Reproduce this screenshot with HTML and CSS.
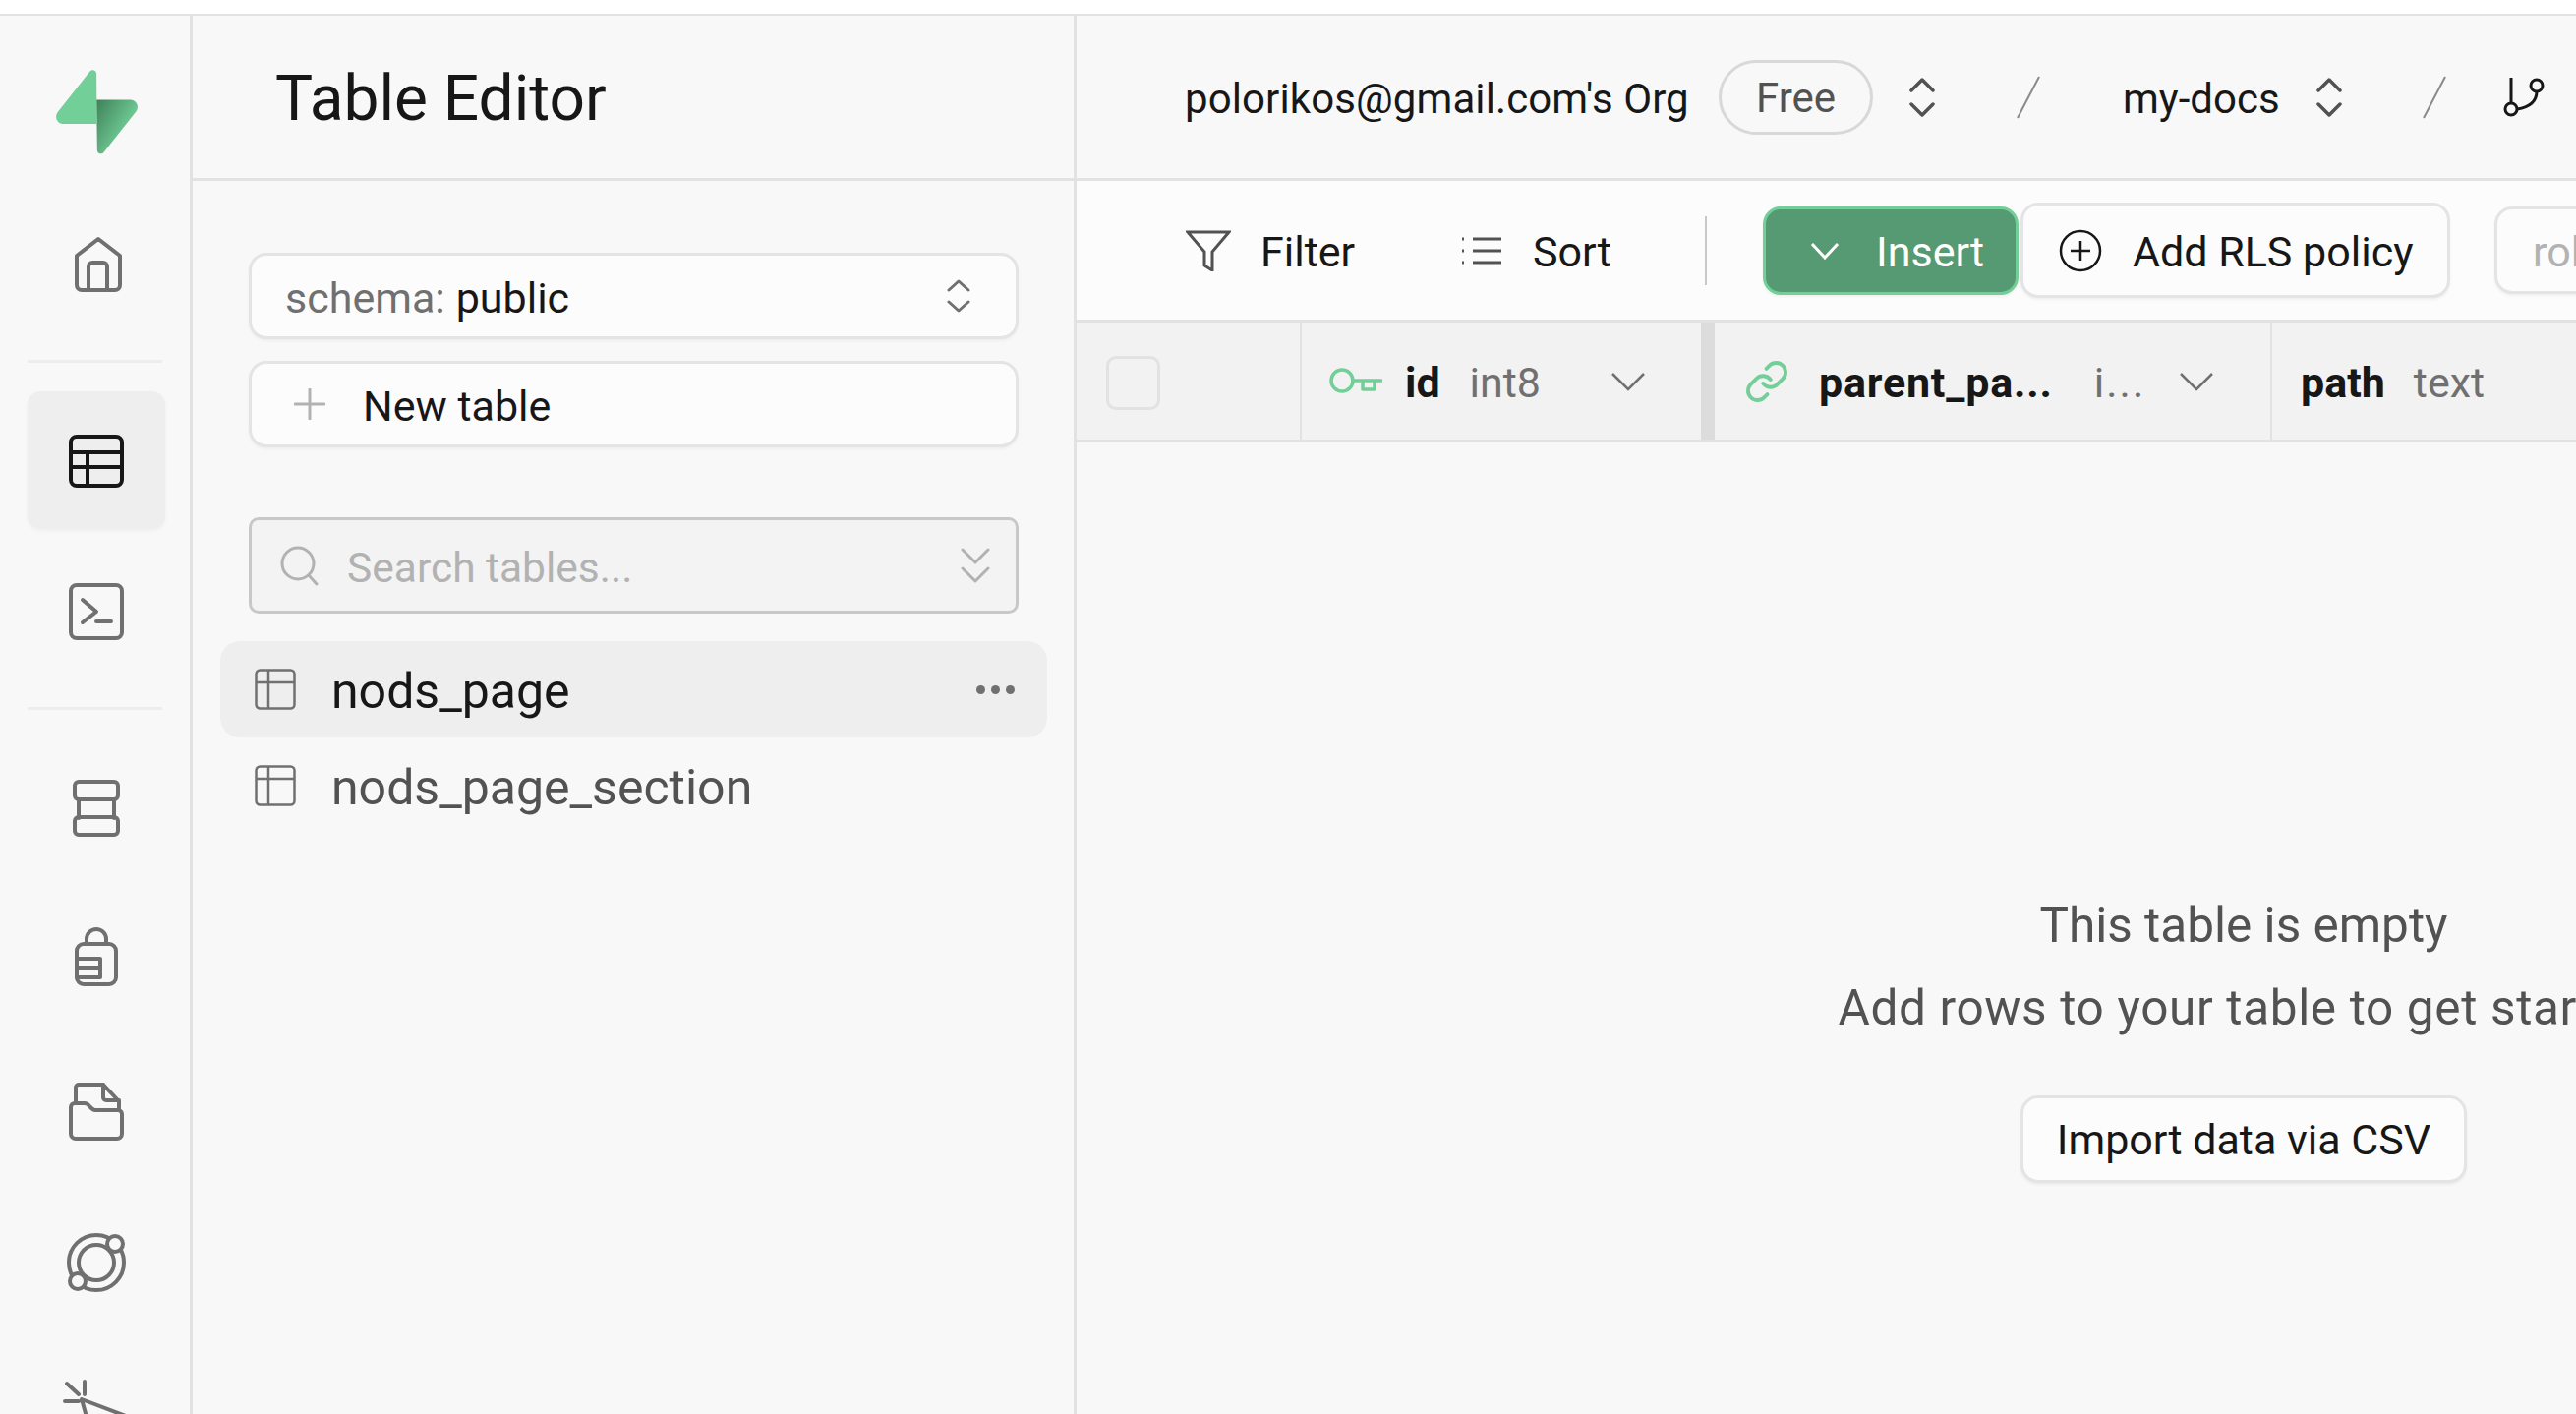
FILE: index.html
```html
<!DOCTYPE html>
<html>
<head>
  <link rel="stylesheet" href="styles.css">
</head>
<body>
  <div class="app">
    <!-- Icon rail -->
    <nav class="rail">
      <div class="rail-logo">
        <svg width="85" height="86" viewBox="0 0 109 113">
          <defs>
            <linearGradient id="boltShade" x1="54" y1="40" x2="104" y2="70" gradientUnits="userSpaceOnUse">
              <stop offset="0" stop-color="#3f8059"/>
              <stop offset="1" stop-color="#72cf97"/>
            </linearGradient>
          </defs>
          <path d="M63.7 110.3C60.8 113.9 55 111.9 55 107.3L54 40.1H99.2C107.4 40.1 112 49.5 106.9 55.9L63.7 110.3Z" fill="url(#boltShade)"/>
          <path d="M45.3 2.1C48.2-1.5 54 .4 54 5L54.5 72.3H9.8C1.6 72.3-2.9 62.8 2.2 56.4L45.3 2.1Z" fill="#72cf97"/>
        </svg>
      </div>
      <a class="rail-item">
        <svg width="60" height="60" viewBox="0 0 60 60"><path d="M10 22 32 5l22 17v30a5 5 0 0 1-5 5H15a5 5 0 0 1-5-5Z"/><path d="M22 57V33a4 4 0 0 1 4-4h11a4 4 0 0 1 4 4v24"/></svg>
      </a>
      <div class="rail-divider"></div>
      <a class="rail-item active">
        <svg width="60" height="60" viewBox="0 0 60 60"><rect x="4" y="6" width="52" height="50" rx="6"/><path d="M4 22h52M4 37h52M21 22v34"/></svg>
      </a>
      <a class="rail-item">
        <svg width="60" height="60" viewBox="0 0 60 60"><rect x="4" y="3" width="52" height="54" rx="6"/><path d="m16 18 14 12-14 11M30 40h15"/></svg>
      </a>
      <div class="rail-divider second"></div>
      <a class="rail-item">
        <svg width="60" height="60" viewBox="0 0 60 60"><rect x="8" y="3" width="44" height="18" rx="4"/><path d="M12 21v19M48 21v19"/><rect x="8" y="39" width="44" height="18" rx="4"/></svg>
      </a>
      <a class="rail-item">
        <svg width="60" height="60" viewBox="0 0 60 60"><path d="M20 14V9a10 10 0 0 1 20 0v5"/><rect x="10" y="14" width="40" height="41" rx="7"/><path d="M10 29h24v19H10M10 38h24"/></svg>
      </a>
      <a class="rail-item">
        <svg width="60" height="60" viewBox="0 0 60 60"><path d="M9 22V6a3 3 0 0 1 3-3h25l16 17v7"/><path d="M37 3v13a3 3 0 0 0 3 3h13"/><path d="M4 26a4 4 0 0 1 4-4h10q3 0 5 3l2 2q2 2 4 2h23a4 4 0 0 1 4 4v20a5 5 0 0 1-5 5H9a5 5 0 0 1-5-5Z"/></svg>
      </a>
      <a class="rail-item">
        <svg width="60" height="60" viewBox="0 0 60 60"><circle cx="30" cy="30" r="28"/><circle cx="30" cy="30" r="18"/><circle class="knock" cx="49" cy="11" r="8"/><circle class="knock" cx="11" cy="49" r="8"/></svg>
      </a>
      <a class="rail-item">
        <svg width="60" height="60" viewBox="0 0 60 60"><path d="m0-1 12 11M18-3v13M-2 17h14M15 15l45 17M15 15l10 36"/></svg>
      </a>
    </nav>

    <!-- Table list -->
    <aside class="panel">
      <div class="panel-head">
        <h1>Table Editor</h1>
      </div>
      <div class="panel-body">
        <div class="field">
          <span class="muted">schema:</span>
          <span class="schema-name">public</span>
          <svg class="thin field-end" width="26" height="34" viewBox="0 0 26 34"><path d="m3 11 10-9 10 9M3 23l10 9 10-9"/></svg>
        </div>
        <div class="field new-table">
          <svg class="thin plus" width="32" height="32" viewBox="0 0 32 32"><path d="M16 1v30M1 16h30"/></svg>
          <span>New table</span>
        </div>
        <div class="search">
          <svg class="thin" width="42" height="42" viewBox="0 0 42 42"><circle cx="18" cy="19" r="16"/><path d="m29 31 8 9"/></svg>
          <span>Search tables...</span>
          <svg class="thin search-end" width="30" height="36" viewBox="0 0 30 36"><path d="m2 2 13 13L28 2M2 21l13 13 13-13"/></svg>
        </div>
        <ul class="table-list">
          <li class="selected">
            <svg class="tbl" width="42" height="42" viewBox="0 0 42 42"><rect x="1.5" y="1.5" width="39" height="39" rx="4"/><path d="M1.5 14h39M14 1.5v39"/></svg>
            <span>nods_page</span>
            <span class="dots"><i></i><i></i><i></i></span>
          </li>
          <li>
            <svg class="tbl" width="42" height="42" viewBox="0 0 42 42"><rect x="1.5" y="1.5" width="39" height="39" rx="4"/><path d="M1.5 14h39M14 1.5v39"/></svg>
            <span>nods_page_section</span>
          </li>
        </ul>
      </div>
    </aside>

    <!-- Main table area -->
    <main class="main">
      <header class="topbar">
        <span class="org">polorikos@gmail.com's Org</span>
        <span class="plan">Free</span>
        <svg class="updown" width="28" height="40" viewBox="0 0 28 40"><path d="m3 13 11-11 11 11M3 27l11 11 11-11"/></svg>
        <svg class="slash" width="24" height="44" viewBox="0 0 24 44"><path d="M23 1 1 43"/></svg>
        <span class="project">my-docs</span>
        <svg class="updown" width="28" height="40" viewBox="0 0 28 40"><path d="m3 13 11-11 11 11M3 27l11 11 11-11"/></svg>
        <svg class="slash second" width="24" height="44" viewBox="0 0 24 44"><path d="M23 1 1 43"/></svg>
        <svg class="branch" width="42" height="42" viewBox="0 0 42 42"><circle cx="8" cy="33" r="6"/><circle cx="34" cy="9" r="6"/><path d="M8 1v26M34 15c0 10-7 16-20 18"/></svg>
      </header>

      <div class="toolbar">
        <div class="tool tool-filter">
          <svg width="46" height="42" viewBox="0 0 46 42"><path d="M2 2h42L27 22v19l-8-5V22Z"/></svg>
          <span>Filter</span>
        </div>
        <div class="tool tool-sort">
          <svg width="42" height="30" viewBox="0 0 42 30"><path d="M12 3h29M12 15h29M12 27h29"/><path class="dash" d="M1 3h2M1 15h2M1 27h2"/></svg>
          <span>Sort</span>
        </div>
        <div class="tool-divider"></div>
        <button class="btn-insert">
          <svg width="30" height="18" viewBox="0 0 30 18"><path d="m2 2 13 14L28 2"/></svg>
          <span>Insert</span>
        </button>
        <button class="btn-rls">
          <svg width="44" height="44" viewBox="0 0 44 44"><circle cx="22" cy="22" r="20"/><path d="M22 12v20M12 22h20"/></svg>
          <span>Add RLS policy</span>
        </button>
        <button class="btn-role"><span>role</span></button>
      </div>

      <div class="grid-head">
        <div class="col col-check"><span class="checkbox"></span></div>
        <div class="col col-id">
          <svg class="col-icon" width="54" height="28" viewBox="0 0 54 28"><circle cx="13" cy="14" r="11"/><path d="M24 14h29M34 14v9h12v-9"/></svg>
          <b>id</b>
          <span class="type">int8</span>
          <svg class="col-chev" width="36" height="20" viewBox="0 0 36 20"><path d="m2 2 16 16L34 2"/></svg>
        </div>
        <div class="col col-parent">
          <svg class="col-icon" width="46" height="46" viewBox="0 0 24 24"><path d="M10 13a5 5 0 0 0 7.54.54l3-3a5 5 0 0 0-7.07-7.07l-1.72 1.71"/><path d="M14 11a5 5 0 0 0-7.54-.54l-3 3a5 5 0 0 0 7.07 7.07l1.71-1.71"/></svg>
          <b>parent_pa...</b>
          <span class="type">i...</span>
          <svg class="col-chev" width="36" height="20" viewBox="0 0 36 20"><path d="m2 2 16 16L34 2"/></svg>
        </div>
        <div class="col col-path">
          <b>path</b>
          <span class="type">text</span>
        </div>
      </div>

      <section class="empty">
        <p>This table is empty</p>
        <p class="empty-sub">Add rows to your table to get started</p>
        <button class="btn-import">Import data via CSV</button>
      </section>
    </main>
  </div>
</body>
</html>
```

FILE: styles.css
```css
html, body {
  margin: 0;
  height: 100%;
  overflow: hidden;
  background: #fff;
}
body {
  font-family: Roboto, Lato, sans-serif;
  color: #171717;
}
svg {
  display: block;
  flex: none;
  fill: none;
}
.app {
  display: flex;
  width: 2620px;
  height: 1424px;
  margin-top: 14px;
  border-top: 2px solid #e2e2e2;
  box-sizing: border-box;
  background: #f8f8f8;
}

/* rail */
.rail {
  width: 196px;
  flex: none;
  box-sizing: border-box;
  border-right: 3px solid #e2e2e2;
  padding: 0 25px 0 28px;
  overflow: hidden;
}
.rail-logo {
  display: flex;
  justify-content: center;
  padding: 55px 0 0;
  height: 127px;
}
.rail-logo svg {
  overflow: visible;
}
.rail-item {
  display: flex;
  align-items: center;
  justify-content: center;
  height: 140px;
  margin-bottom: 14px;
  border-radius: 14px;
}
.rail-item svg {
  stroke: #707070;
  stroke-width: 4;
  stroke-linecap: round;
  stroke-linejoin: round;
  overflow: visible;
}
.rail-item .knock {
  fill: #f8f8f8;
}
.rail-item.active {
  background: #eeeeee;
  box-shadow: 0 2px 4px rgba(0, 0, 0, 0.04);
}
.rail-item.active svg {
  stroke: #171717;
}
.rail-divider {
  height: 3px;
  background: #ededed;
  margin: 28px 3px 29px 0;
}
.rail-divider.second {
  margin: 27px 3px 30px 0;
}

/* panel */
.panel {
  width: 899px;
  flex: none;
  box-sizing: border-box;
  border-right: 3px solid #e2e2e2;
}
.panel-head {
  height: 165px;
  border-bottom: 3px solid #e2e2e2;
  padding-left: 84px;
  display: flex;
  align-items: center;
  box-sizing: content-box;
}
.panel-head h1 {
  margin: 0;
  padding-top: 4px;
  font-size: 64px;
  font-weight: 400;
}
.panel-body {
  padding: 73px 0 0 28px;
}
.field {
  display: flex;
  align-items: center;
  width: 783px;
  height: 88px;
  box-sizing: border-box;
  padding-left: 34px;
  margin-left: 29px;
  background: #fcfcfc;
  border: 3px solid #e4e4e4;
  border-radius: 18px;
  box-shadow: 0 2px 3px rgba(0, 0, 0, 0.04);
  font-size: 43px;
}
.field span,
.table-list li > span:not(.dots) {
  padding-top: 4px;
}
.search span {
  padding-top: 5px;
}
.muted {
  color: #707070;
}
.schema-name {
  margin-left: 11px;
}
.field-end {
  margin-left: auto;
  margin-right: 45px;
  stroke: #707070;
}
.thin {
  stroke-width: 3;
  stroke-linecap: round;
  stroke-linejoin: round;
}
.new-table {
  margin-top: 22px;
  padding-left: 43px;
}
.plus {
  stroke: #b2b2b2;
  margin-right: 38px;
}
.search {
  display: flex;
  align-items: center;
  width: 783px;
  height: 98px;
  box-sizing: border-box;
  margin: 71px 0 28px 29px;
  padding-left: 29px;
  background: #f3f3f3;
  border: 3px solid #c8c8c8;
  border-radius: 10px;
  font-size: 42.5px;
  color: #b2b2b2;
}
.search svg {
  stroke: #b2b2b2;
}
.search span {
  margin-left: 26px;
}
.search-end {
  margin-left: auto;
  margin-right: 26px;
}
.table-list {
  list-style: none;
  margin: 0;
  padding: 0;
  width: 841px;
}
.table-list li {
  display: flex;
  align-items: center;
  height: 98px;
  padding-left: 35px;
  box-sizing: border-box;
  border-radius: 20px;
  font-size: 50px;
  color: #525252;
}
.table-list li.selected {
  background: #eeeeee;
  color: #171717;
}
.tbl {
  stroke: #707070;
  stroke-width: 2.5;
  margin-right: 36px;
}
.dots {
  display: flex;
  gap: 6px;
  margin-left: auto;
  margin-right: 33px;
}
.dots i {
  width: 9px;
  height: 9px;
  border-radius: 50%;
  background: #707070;
}

/* main */
.main {
  width: 1525px;
  flex: none;
  overflow: hidden;
}
.topbar {
  display: flex;
  align-items: center;
  height: 165px;
  padding-left: 110px;
  border-bottom: 3px solid #e2e2e2;
  font-size: 42px;
}
.org {
  width: 543px;
  flex: none;
  padding-top: 3px;
  letter-spacing: 0.1px;
}
.plan {
  display: flex;
  align-items: center;
  justify-content: center;
  width: 157px;
  height: 76px;
  padding-top: 2px;
  box-sizing: border-box;
  border: 3px solid #d8d8d8;
  border-radius: 38px;
  color: #525252;
}
.updown {
  stroke: #525252;
  stroke-width: 3.5;
  stroke-linecap: round;
  stroke-linejoin: round;
  margin-left: 36px;
}
.slash {
  stroke: #8a8a8a;
  stroke-width: 2;
  margin-left: 82px;
}
.slash.second {
  margin-left: 81px;
}
.project {
  width: 196px;
  flex: none;
  padding-top: 3px;
  margin-left: 84px;
}
.project + .updown {
  margin-left: 0;
}
.branch {
  stroke: #171717;
  stroke-width: 3;
  margin-left: 58px;
}

.toolbar {
  display: flex;
  align-items: center;
  height: 144px;
  padding-left: 111px;
  box-sizing: border-box;
  background: #fcfcfc;
  border-bottom: 3px solid #e2e2e2;
  font-size: 43px;
}
.tool {
  display: flex;
  align-items: center;
  flex: none;
}
.tool span,
button span {
  padding-top: 3px;
}
.tool svg {
  stroke: #525252;
  stroke-width: 3;
}
.tool .dash {
  stroke-width: 3;
}
.tool-filter {
  width: 280px;
  gap: 30px;
}
.tool-sort {
  width: 248px;
  gap: 31px;
}
.tool-divider {
  width: 2px;
  height: 70px;
  background: #c8c8c8;
  margin-right: 57px;
  flex: none;
}
button {
  display: flex;
  align-items: center;
  flex: none;
  box-sizing: border-box;
  font-family: inherit;
  font-size: 43px;
  color: #171717;
  background: #fcfcfc;
  border: 3px solid #e4e4e4;
  border-radius: 18px;
  padding: 0;
  box-shadow: 0 2px 3px rgba(0, 0, 0, 0.05);
}
.btn-insert {
  width: 260px;
  height: 90px;
  padding-left: 45px;
  gap: 37px;
  background: #559a72;
  border-color: #72cf97;
  color: #fff;
  margin-right: 2px;
}
.btn-insert svg {
  stroke: #fff;
  stroke-width: 3;
}
.btn-rls {
  width: 437px;
  height: 97px;
  padding-left: 36px;
  gap: 31px;
}
.btn-rls svg {
  stroke: #171717;
  stroke-width: 2.5;
}
.btn-role {
  width: 200px;
  height: 89px;
  margin-left: 45px;
  padding-left: 36px;
  color: #b2b2b2;
}

.grid-head {
  display: flex;
  height: 122px;
  box-sizing: border-box;
  background: #f2f2f2;
  border-bottom: 3px solid #e2e2e2;
  font-size: 43px;
}
.col {
  display: flex;
  align-items: center;
  flex: none;
  box-sizing: border-box;
}
.col b {
  font-weight: 700;
  padding-top: 2px;
}
.type {
  color: #707070;
  padding-top: 2px;
}
.col-check {
  width: 229px;
  padding-left: 30px;
  border-right: 2px solid #e2e2e2;
}
.checkbox {
  width: 55px;
  height: 55px;
  margin-top: 4px;
  box-sizing: border-box;
  border: 3px solid #e2e2e2;
  border-radius: 10px;
}
.col-id {
  width: 420px;
  padding-left: 28px;
  border-right: 14px solid #dcdcdc;
}
.col-icon {
  stroke: #72cf97;
  stroke-width: 3.5;
  stroke-linecap: round;
  stroke-linejoin: round;
  margin-top: -2px;
}
.col-parent .col-icon {
  stroke-width: 2;
  margin-top: 0;
}
.col-id b {
  margin-left: 23px;
}
.col-id .type {
  margin-left: 30px;
}
.col-chev {
  stroke: #707070;
  stroke-width: 2.5;
  margin-left: auto;
}
.col-id .col-chev {
  margin-right: 56px;
}
.col-parent {
  width: 567px;
  padding-left: 30px;
  border-right: 2px solid #e2e2e2;
}
.col-parent b {
  margin-left: 30px;
  letter-spacing: 0.8px;
}
.col-parent .type {
  margin-left: 42px;
  letter-spacing: 2px;
}
.col-parent .col-chev {
  margin-right: 57px;
}
.col-path {
  padding-left: 29px;
}
.col-path .type {
  margin-left: 29px;
}

.empty {
  display: flex;
  flex-direction: column;
  align-items: center;
  width: 2374px;
  padding-top: 464px;
  color: #525252;
  font-size: 49.5px;
}
.empty p {
  margin: 0 0 29px;
  line-height: 55px;
  white-space: nowrap;
}
.empty .empty-sub {
  letter-spacing: 0.65px;
}
.btn-import {
  width: 454px;
  height: 89px;
  justify-content: center;
  margin-top: 32px;
}
```
